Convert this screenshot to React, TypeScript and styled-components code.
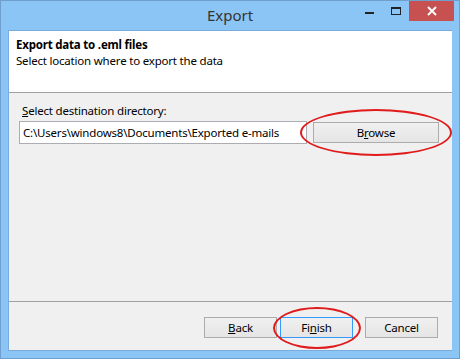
import styled, {createGlobalStyle} from "styled-components";

const GlobalStyle = createGlobalStyle`
  html, body {
    margin: 0;
    padding: 0;
    background: #ffffff;
  }
  body {
    font-family: "Noto Sans", "Liberation Sans", sans-serif;
  }
`

const App = () => {
    return (
        <>
            <GlobalStyle/>
            <Window>
                <TitleBar>
                    <Title>Export</Title>
                    <Controls>
                        <ControlButton>
                            <svg width="10" height="10" viewBox="0 0 10 10">
                                <rect x="0" y="6" width="9" height="2" fill="#222"/>
                            </svg>
                        </ControlButton>
                        <ControlButton>
                            <svg width="10" height="10" viewBox="0 0 10 10">
                                <rect x="0.5" y="1.5" width="9" height="7" fill="none" stroke="#222"/>
                                <rect x="0" y="1" width="10" height="2" fill="#222"/>
                            </svg>
                        </ControlButton>
                        <CloseButton>
                            <svg width="10" height="10" viewBox="0 0 10 10">
                                <path d="M1 1 L9 9 M9 1 L1 9" stroke="#fff" strokeWidth="2"/>
                            </svg>
                        </CloseButton>
                    </Controls>
                </TitleBar>
                <Content>
                    <Header>
                        <HeaderTitle>Export data to .eml files</HeaderTitle>
                        <HeaderText>Select location where to export the data</HeaderText>
                    </Header>
                    <Body>
                        <Label><u>S</u>elect destination directory:</Label>
                        <PathRow>
                            <PathInput readOnly value={"C:\\Users\\windows8\\Documents\\Exported e-mails"}/>
                            <Annotated>
                                <DialogButton $width={126}>B<u>r</u>owse</DialogButton>
                                <RedEllipse $w={152} $h={47}/>
                            </Annotated>
                        </PathRow>
                    </Body>
                    <Footer>
                        <DialogButton $width={73}><u>B</u>ack</DialogButton>
                        <Annotated>
                            <DialogButton $width={73} $focused>Fi<u>n</u>ish</DialogButton>
                            <RedEllipse $w={88} $h={42}/>
                        </Annotated>
                        <CancelSlot>
                            <DialogButton $width={73}>Cancel</DialogButton>
                        </CancelSlot>
                    </Footer>
                </Content>
            </Window>
        </>
    )
}

export default App

const Window = styled.div`
  width: 460px;
  height: 359px;
  box-sizing: border-box;
  border: 1px solid #6e9fcd;
  background: #8bc5f6;
  display: flex;
  flex-direction: column;
  padding: 0 7px 7px;
`

const TitleBar = styled.div`
  height: 29px;
  position: relative;
  display: flex;
  align-items: center;
  justify-content: center;
`

const Title = styled.div`
  font-family: "Noto Sans", sans-serif;
  font-size: 15px;
  color: #333;
  margin-top: -1px;
`

const Controls = styled.div`
  position: absolute;
  top: 0;
  right: -2px;
  display: flex;
  align-items: flex-start;
  height: 100%;
`

const ControlButton = styled.div`
  width: 26px;
  height: 20px;
  display: flex;
  align-items: center;
  justify-content: center;
`

const CloseButton = styled.div`
  width: 45px;
  height: 20px;
  background: #c75050;
  display: flex;
  align-items: center;
  justify-content: center;
`

const Content = styled.div`
  flex: 1;
  border: 1px solid #7aacdb;
  border-right-color: #8bc5f6;
  background: #f0f0f0;
  display: flex;
  flex-direction: column;
  margin-right: -1px;
  font-size: 11.5px;
  letter-spacing: -0.2px;
`

const Header = styled.div`
  height: 62px;
  box-sizing: border-box;
  background: #ffffff;
  border-bottom: 1px solid #a0a0a0;
  padding: 6px 7px;
  line-height: 16px;
  color: #000;
`

const HeaderTitle = styled.div`
  font-weight: bold;
`

const HeaderText = styled.div``

const Body = styled.div`
  flex: 1;
  padding: 10px 12px 0 10px;
  color: #000;
`

const Label = styled.div`
  line-height: 16px;
  margin-left: 3px;
  margin-bottom: 2px;
`

const PathRow = styled.div`
  display: flex;
  align-items: center;
  gap: 6px;
`

const PathInput = styled.input`
  width: 288px;
  height: 23px;
  box-sizing: border-box;
  border: 1px solid #abadb3;
  padding: 0 3px;
  font-family: "Noto Sans", sans-serif;
  font-size: 11.5px;
  letter-spacing: -0.2px;
  color: #000;
  background: #fff;
  outline: none;
`

const Annotated = styled.div`
  position: relative;
  display: flex;
`

const DialogButton = styled.button<{ $width: number; $focused?: boolean }>`
  width: ${p => p.$width}px;
  height: 21px;
  box-sizing: border-box;
  border: 1px solid ${p => p.$focused ? "#3399ff" : "#acacac"};
  background: linear-gradient(#f0f0f0, #e5e5e5);
  font-family: "Noto Sans", sans-serif;
  font-size: 11.5px;
  letter-spacing: -0.2px;
  color: #000;
  padding: 0;
  line-height: 19px;
`

const CancelSlot = styled.div`
  display: flex;
  margin-left: 9px;
`

const RedEllipse = styled.div<{ $w: number; $h: number }>`
  position: absolute;
  left: 50%;
  top: 50%;
  width: ${p => p.$w}px;
  height: ${p => p.$h}px;
  margin-left: ${p => -p.$w / 2}px;
  margin-top: ${p => -p.$h / 2}px;
  box-sizing: border-box;
  border: 2px solid #e01b1b;
  border-radius: 50%;
  pointer-events: none;
`

const Footer = styled.div`
  height: 49px;
  box-sizing: border-box;
  border-top: 1px solid #a0a0a0;
  display: flex;
  align-items: flex-start;
  justify-content: flex-end;
  gap: 3px;
  padding: 15px 14px 0 0;
`
